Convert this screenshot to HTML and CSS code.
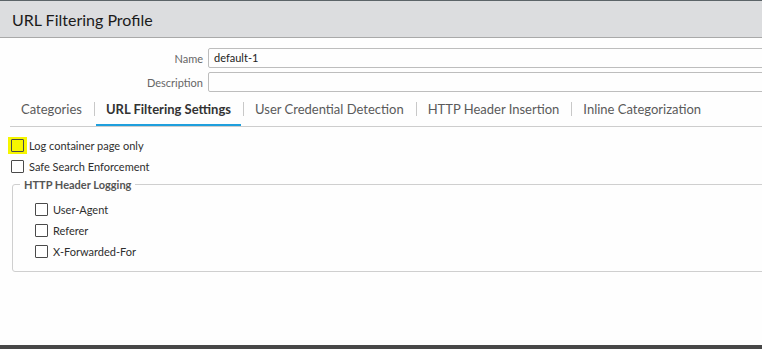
FILE: index.html
```html
<!DOCTYPE html>
<html>
<head>
<meta charset="utf-8">
<link rel="stylesheet" href="styles.css">
</head>
<body>
<div class="dialog">
  <div class="header"><span class="title">URL Filtering Profile</span></div>
  <div class="form">
    <div class="row">
      <label class="label">Name</label>
      <div class="input">default-1</div>
    </div>
    <div class="row">
      <label class="label">Description</label>
      <div class="input"></div>
    </div>
  </div>
  <div class="tabs">
    <div class="tab">Categories</div>
    <div class="sep"></div>
    <div class="tab active">URL Filtering Settings</div>
    <div class="sep"></div>
    <div class="tab">User Credential Detection</div>
    <div class="sep"></div>
    <div class="tab">HTTP Header Insertion</div>
    <div class="sep"></div>
    <div class="tab">Inline Categorization</div>
  </div>
  <div class="content">
    <div class="check-row">
      <span class="hl"><span class="box"></span></span>
      <span class="check-text first">Log container page only</span>
    </div>
    <div class="check-row">
      <span class="box"></span>
      <span class="check-text">Safe Search Enforcement</span>
    </div>
    <fieldset class="group">
      <legend class="legend">HTTP Header Logging</legend>
      <div class="group-list">
        <div class="check-row"><span class="box"></span><span class="check-text">User-Agent</span></div>
        <div class="check-row"><span class="box"></span><span class="check-text">Referer</span></div>
        <div class="check-row"><span class="box"></span><span class="check-text">X-Forwarded-For</span></div>
      </div>
    </fieldset>
  </div>
</div>
<div class="bottom-bar"></div>
</body>
</html>
```

FILE: styles.css
```css
html, body {
  margin: 0;
  padding: 0;
  background: #fefefe;
  overflow: hidden;
  width: 762px;
  height: 349px;
}
body {
  font-family: Lato, "Open Sans", sans-serif;
  color: #333;
}
.dialog {
  height: 345px;
  display: flex;
  flex-direction: column;
}
.header {
  box-sizing: border-box;
  height: 38px;
  background: #dcdddf;
  border-top: 1px solid #5c6468;
  border-bottom: 1px solid #a9a9a9;
  display: flex;
  align-items: center;
  padding-left: 12px;
}
.title {
  font-size: 16px;
  color: #1b1b1b;
}
.form {
  margin-top: 10px;
  display: flex;
  flex-direction: column;
  gap: 4px;
}
.row {
  display: flex;
  align-items: center;
  gap: 5px;
  margin-right: -20px;
}
.label {
  width: 203px;
  text-align: right;
  font-size: 11px;
  color: #666;
}
.input {
  flex: 1;
  box-sizing: border-box;
  height: 20px;
  border: 1px solid #bdbdbd;
  border-radius: 2px;
  font-size: 11px;
  line-height: 18px;
  padding-left: 5px;
  color: #222;
}
.tabs {
  margin-left: 10px;
  padding-left: 1px;
  display: flex;
  align-items: center;
  border-bottom: 1px solid #cdcdcd;
  height: 34px;
}
.tab {
  box-sizing: border-box;
  height: 34px;
  line-height: 34px;
  padding: 0 10px;
  font-size: 13px;
  color: #5a5a5a;
  border-bottom: 2px solid transparent;
}
.tab.active {
  font-weight: bold;
  color: #333;
  border-bottom-color: #1f9fdd;
}
.sep {
  width: 1px;
  height: 14px;
  background: #c8c8c8;
  margin: 0 1px 0 2px;
}
.content {
  padding-top: 8px;
  display: flex;
  flex-direction: column;
}
.check-row {
  display: flex;
  align-items: center;
  height: 21px;
  padding-left: 11px;
}
.box {
  box-sizing: border-box;
  width: 13px;
  height: 13px;
  border: 1px solid #4a4a4a;
  border-radius: 1px;
  background: #fff;
  display: inline-block;
}
.hl {
  display: inline-flex;
  background: #f6f600;
  padding: 2px 3px;
  margin: 0 -3px;
}
.hl .box {
  background: #f6f600;
}
.check-text {
  font-size: 11px;
  color: #2e2e2e;
  margin-left: 5px;
}
.group {
  margin: 1px -20px 0 12px;
  padding: 0 0 9px 7px;
  border: 1px solid #cfcfcf;
  border-radius: 3px;
}
.legend {
  padding: 0 4px;
  font-size: 11px;
  font-weight: bold;
  color: #555;
}
.group-list {
  padding-top: 8px;
  padding-left: 4px;
}
.group-list .check-row {
  padding-left: 11px;
}
.bottom-bar {
  height: 4px;
  background: #474747;
}
```
